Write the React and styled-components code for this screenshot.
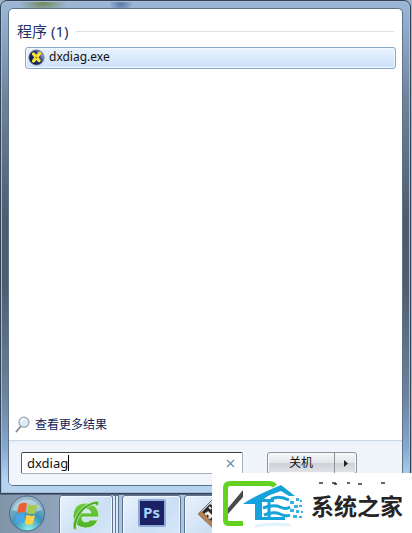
import React, { useState } from "react";
import styled, { createGlobalStyle } from "styled-components";

const GlobalStyle = createGlobalStyle`
  * { box-sizing: border-box; }
  body { margin: 0; }
  button, input { font: inherit; color: inherit; }
`;

const Desktop = styled.div`
  position: relative;
  display: flex;
  flex-direction: column;
  height: 100vh;
  overflow: hidden;
  background: #9fb4ca;
  color: #111;
  font: 12px/16px "Noto Sans", "Noto Sans CJK SC", sans-serif;
`;

const StartMenu = styled.main`
  flex: 1;
  min-height: 0;
  display: flex;
  margin-right: 1px;
  padding: 7px;
  border: 1px solid #32435a;
  border-radius: 7px 7px 0 0;
  box-shadow: inset 0 0 0 1px #a9bccf;
  background:
    radial-gradient(ellipse 24px 10px at 42px 2px, #6f8a5a, transparent),
    radial-gradient(ellipse 12px 8px at 120px 3px, #5a75a8, transparent),
    linear-gradient(#9db7d6, #8ba4c2 8%, #6e839a 20%, #4b5c6c 45%, #4d5e6e 58%, #6c839c 80%, #87a9cf 91%, #b4d3f1 97%);
`;

const Panel = styled.div`
  flex: 1;
  display: flex;
  flex-direction: column;
  border: 1px solid #5d7188;
  border-radius: 5px;
  background: #fff;
  overflow: hidden;
`;

const Results = styled.section`
  flex: 1;
  padding: 13px 6px 0 8px;
`;

const GroupTitle = styled.h2`
  display: flex;
  align-items: center;
  gap: 8px;
  margin: 0 2px 7px 0;
  color: #1e3268;
  font-size: 15px;
  line-height: 18px;
  font-weight: 400;

  &::after {
    content: "";
    flex: 1;
    height: 1px;
    background: #dcdfe3;
  }
`;

const ResultItem = styled.button`
  display: flex;
  align-items: center;
  gap: 4px;
  width: calc(100% - 8px);
  height: 22px;
  margin-left: 8px;
  padding: 0 2px 2px;
  border: 1px solid #8ba7c7;
  border-radius: 3px;
  background: linear-gradient(#eaf3fe, #cbe1fb);
  box-shadow: inset 0 0 0 1px #f2f8ff;
  text-align: left;
`;

const MoreLink = styled.a`
  display: flex;
  align-items: center;
  align-self: flex-start;
  gap: 4px;
  margin: 0 0 7px 6px;
  color: #0d2258;
  text-decoration: none;
`;

const Footer = styled.footer`
  display: flex;
  align-items: flex-start;
  gap: 24px;
  height: 45px;
  padding: 11px 45px 0 12px;
  border-top: 1px solid #ccd8e6;
  background: linear-gradient(#e8eef7, #f0f5fc 5px);
`;

const SearchBox = styled.form`
  flex: 1;
  display: flex;
  align-items: center;
  height: 22px;
  padding: 0 5px;
  border: 1px solid #a4adb8;
  border-top-color: #3c4046;
  border-left-color: #5a6068;
  border-radius: 2px;
  background: #fff;
`;

const SearchInput = styled.input`
  field-sizing: content;
  min-width: 0;
  height: 18px;
  padding: 0;
  border: 0;
  outline: 0;
  background: none;
  font-size: 13px;
  caret-color: transparent;
`;

const Caret = styled.span`
  width: 1px;
  height: 16px;
  margin-right: auto;
  background: #000;
`;

const ClearButton = styled.button`
  display: flex;
  padding: 2px;
  border: 0;
  background: none;
`;

const PowerGroup = styled.div`
  display: flex;
  height: 22px;
  border: 1px solid #8d939b;
  border-radius: 3px;
  background: linear-gradient(#f6f7f9, #e4e6ea 48%, #cdd0d5 50%, #e2e4e8);
  box-shadow: inset 0 0 0 1px #f8f9fb;
`;

const PowerButton = styled.button`
  display: flex;
  align-items: center;
  justify-content: center;
  width: ${(p) => (p.$narrow ? 22 : 66)}px;
  padding: 0;
  border: 0;
  border-left: ${(p) => (p.$narrow ? "1px solid #8d939b" : "0")};
  background: none;
`;

const Taskbar = styled.nav`
  display: flex;
  gap: 3px;
  height: 39px;
  padding-left: 4px;
  border-top: 1px solid #56697f;
  background: linear-gradient(90deg, #8195a9, #8ea3ba 55px, #a9c4e1 100px, #b3cfeb);
`;

const StartButton = styled.button`
  width: 52px;
  padding: 0 0 0 4px;
  border: 0;
  background: none;
  text-align: left;
`;

const TaskButton = styled.button`
  display: flex;
  justify-content: center;
  width: ${(p) => p.$width}px;
  height: 42px;
  padding: 3px 0 0;
  border: 1px solid #5d738b;
  border-radius: 3px;
  box-shadow: inset 0 0 0 1px #eff7ff;
  background: linear-gradient(135deg, #e8f2fc, #cbdff4 60%, #d6e7fa);
`;

const TaskGroup = styled.div`
  display: flex;
  flex: none;
`;

const StackEdge = styled.span`
  width: 3px;
  border: solid #5d738b;
  border-width: 1px 1px 0 0;
  background: #dcebfa;
`;

const PsTile = styled.span`
  width: 28px;
  height: 28px;
  border: 2px solid #8ea9d6;
  border-radius: 2px;
  background: #1c2165;
  color: #a9d2fa;
  font: bold 15px/23px "Open Sans", sans-serif;
  text-align: center;
`;

const Watermark = styled.aside`
  position: absolute;
  right: 0;
  bottom: 0;
  display: flex;
  align-items: center;
  width: 200px;
  height: 60px;
  background: #fff;
`;

const Brand = styled.strong`
  margin-top: 4px;
  color: #252525;
  font: bold 23px/28px "Noto Sans CJK SC", sans-serif;
  white-space: nowrap;
`;

const Specks = styled.svg`
  position: absolute;
  top: 8px;
  left: 104px;
`;

const DxIcon = () => (
  <svg width="17" height="17" viewBox="0 0 17 17" aria-hidden="true">
    <defs>
      <linearGradient id="dx" x1="0" y1=".8" x2="1" y2=".2">
        <stop offset="0" stopColor="#0b0c38" />
        <stop offset=".6" stopColor="#29317a" />
        <stop offset="1" stopColor="#c3cce0" />
      </linearGradient>
    </defs>
    <circle cx="8.5" cy="8.5" r="7.6" fill="url(#dx)" stroke="#65708c" strokeWidth=".8" />
    <path d="M5.500 5L11 11.500M11.500 4.500L5.500 12" stroke="#f4e631" strokeWidth="3.4" strokeLinecap="round" />
    <circle cx="8.3" cy="8.5" r="1" fill="#9b8d15" />
  </svg>
);

const MagnifierIcon = () => (
  <svg width="16" height="17" viewBox="0 0 16 17" aria-hidden="true">
    <path d="M5.500 10.500L1.500 15.500" stroke="#8b8f92" strokeWidth="2" strokeLinecap="round" />
    <circle cx="9" cy="6.200" r="5" fill="#dcecf4" stroke="#98a5ad" strokeWidth="1.200" />
    <path d="M6 6Q6.500 3 9.500 3" fill="none" stroke="#fff" strokeWidth="1.400" />
  </svg>
);

const WindowsOrb = () => (
  <svg width="38" height="38" viewBox="0 0 38 38" aria-hidden="true">
    <defs>
      <radialGradient id="orb" cx=".55" cy=".95" r=".95">
        <stop offset="0" stopColor="#8df3ec" />
        <stop offset=".45" stopColor="#3d93b8" />
        <stop offset="1" stopColor="#a9bdcd" />
      </radialGradient>
    </defs>
    <circle cx="19" cy="18.500" r="17.500" fill="url(#orb)" stroke="#486a84" />
    <path d="M4 15A16 16 0 0 1 34 15Q19 20 4 15Z" fill="#fff" opacity=".4" />
    <path d="M11 9.500Q15 6.500 19 8.500L17.500 17.500Q13 16 9 18.500Z" fill="#ec6131" />
    <path d="M20.500 9Q25 12 29.500 9L27.500 18Q23 20.500 19 18Z" fill="#a4cb4f" />
    <path d="M8.500 20Q13 17 17 19L15.500 28Q11 26 6.500 28.500Z" fill="#4ba5e6" />
    <path d="M18.500 19.500Q23 22 27 20L25 28.500Q21 31 17 28.500Z" fill="#ffd146" />
  </svg>
);

const BrowserIcon = () => (
  <svg width="34" height="34" viewBox="0 0 34 34" aria-hidden="true">
    <defs>
      <linearGradient id="browser" x2="0" y2="1">
        <stop offset="0" stopColor="#6fcb42" />
        <stop offset="1" stopColor="#4cb525" />
      </linearGradient>
    </defs>
    <path d="M30 18H13Q12.500 23 17 23Q20 23 21 21H29Q25.500 29 16.500 29Q4 28 4 16.500Q5 4 17 4Q30 5 30 18ZM13 14H22Q21 10 17.500 10Q13.500 10 13 14Z" fill="url(#browser)" stroke="#e9f8df" strokeWidth=".7" />
    <path d="M8 31Q2 31 5 22Q8 12 17 6Q24 2 29 2Q31 4 28 8Q28 4 23 6Q13 10 9 20Q6 27 8 31Z" fill="#48ac28" stroke="#d8f2c9" strokeWidth=".7" />
  </svg>
);

const FilmIcon = () => (
  <svg width="34" height="34" viewBox="0 0 34 34" aria-hidden="true">
    <path d="M15 1L33 16L20 33L1 15Z" fill="#d9d5cc" stroke="#777" />
    <path d="M1 15L20 33L22 30L4 12Z" fill="#b98150" />
    <path d="M13 5L30 17L21 29L5 13Z" fill="#25282c" />
    <path d="M8 14L19 25M12 8L26 20" stroke="#eee4d2" strokeWidth="2" strokeDasharray="3 2" />
    <path d="M10 13L15 18" stroke="#f6efe3" strokeWidth="3" />
  </svg>
);

const BrandMark = () => (
  <svg width="99" height="60" viewBox="0 0 99 60" aria-hidden="true">
    <path d="M31 50.500H17Q13.500 50.500 13.500 47V15Q13.500 10.500 18 10.500H57Q61 10.500 63 13" fill="none" stroke="#63d31f" strokeWidth="5" />
    <path d="M16 35L31 17V24L16 41Z" fill="#4a4a4a" />
    <path d="M31 31Q40 24 69 12L83 23L77 23L69 18L58 22Q54 24 52 26H62V29H50V44H73V47H43V31Z" fill="#16a3dc" />
    <path d="M59 26Q67 22 77 27M51 35Q62 31 68 34T78 34M52 42Q62 38 68 41T78 42" fill="none" stroke="#16a3dc" strokeWidth="3" />
    <path d="M57 28V45" stroke="#16a3dc" strokeWidth="3" />
    <path d="M78 28h4v3h-4zM84 25h3v3h-3zM88 27h2v2h-2zM82 32h4v3h-4zM87 32h3v2h-3zM78 36h4v3h-4zM84 37h3v3h-3zM89 38h2v2h-2zM81 42h4v3h-4zM87 43h3v2h-3z" fill="#35b3e4" />
    <path d="M43 53Q58 50 78 52" fill="none" stroke="#e0f4fb" strokeWidth="3" />
  </svg>
);

export default function App() {
  const [query, setQuery] = useState("dxdiag");
  return (
    <>
      <GlobalStyle />
      <Desktop>
        <StartMenu>
          <Panel>
            <Results>
              <GroupTitle>程序 (1)</GroupTitle>
              <ResultItem type="button"><DxIcon />dxdiag.exe</ResultItem>
            </Results>
            <MoreLink href="#results"><MagnifierIcon />查看更多结果</MoreLink>
            <Footer>
              <SearchBox onSubmit={(e) => e.preventDefault()}>
                <SearchInput aria-label="搜索" value={query} onChange={(e) => setQuery(e.target.value)} />
                <Caret />
                <ClearButton type="button" aria-label="清除" onClick={() => setQuery("")}>
                  <svg width="9" height="9" viewBox="0 0 9 9"><path d="M1 1L8 8M8 1L1 8" stroke="#5d8fad" strokeWidth="1.2" /></svg>
                </ClearButton>
              </SearchBox>
              <PowerGroup>
                <PowerButton type="button">关机</PowerButton>
                <PowerButton type="button" $narrow aria-label="关机选项">
                  <svg width="4" height="7" viewBox="0 0 4 7"><path d="M0 0L4 3.500L0 7Z" fill="#222" /></svg>
                </PowerButton>
              </PowerGroup>
            </Footer>
          </Panel>
        </StartMenu>
        <Taskbar>
          <StartButton type="button" aria-label="开始"><WindowsOrb /></StartButton>
          <TaskGroup>
            <TaskButton type="button" $width={54} aria-label="浏览器"><BrowserIcon /></TaskButton>
            <StackEdge />
            <StackEdge />
          </TaskGroup>
          <TaskButton type="button" $width={59} aria-label="Photoshop"><PsTile>Ps</PsTile></TaskButton>
          <TaskButton type="button" $width={60} aria-label="视频"><FilmIcon /></TaskButton>
        </Taskbar>
        <Watermark>
          <BrandMark />
          <Brand>系统之家</Brand>
          <Specks width="80" height="5" viewBox="0 0 80 5" aria-hidden="true">
            <path d="M3 2h4M16 2h4M18 3h3M31 2h3M42 3h4M65 2h4" stroke="#333" strokeWidth="1.500" />
          </Specks>
        </Watermark>
      </Desktop>
    </>
  );
}
